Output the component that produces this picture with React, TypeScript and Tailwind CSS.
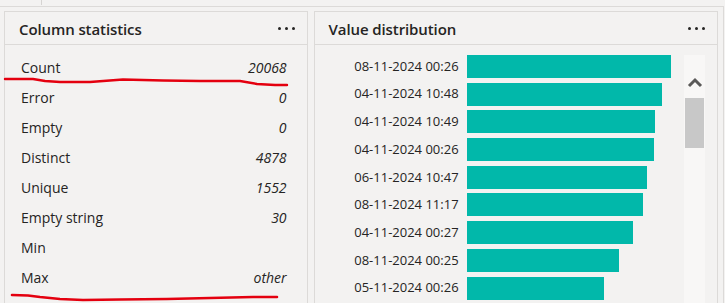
import React from "react";

const stats: { label: string; value: string }[] = [
  { label: "Count", value: "20068" },
  { label: "Error", value: "0" },
  { label: "Empty", value: "0" },
  { label: "Distinct", value: "4878" },
  { label: "Unique", value: "1552" },
  { label: "Empty string", value: "30" },
  { label: "Min", value: "" },
  { label: "Max", value: "other" },
];

const bars: { label: string; width: number }[] = [
  { label: "08-11-2024 00:26", width: 204 },
  { label: "04-11-2024 10:48", width: 195 },
  { label: "04-11-2024 10:49", width: 188 },
  { label: "04-11-2024 00:26", width: 187 },
  { label: "06-11-2024 10:47", width: 180 },
  { label: "08-11-2024 11:17", width: 176 },
  { label: "04-11-2024 00:27", width: 166 },
  { label: "08-11-2024 00:25", width: 152 },
  { label: "05-11-2024 00:26", width: 137 },
];

const Dots = () => (
  <div className="flex items-center gap-[4px] pt-[1px]">
    <span className="w-[3px] h-[3px] rounded-full bg-[#252423]" />
    <span className="w-[3px] h-[3px] rounded-full bg-[#252423]" />
    <span className="w-[3px] h-[3px] rounded-full bg-[#252423]" />
  </div>
);

const PanelHeader = ({ title }: { title: string }) => (
  <div className="h-[33px] flex items-center justify-between border-b border-[#dcdad8] pl-[14px] pr-[12px]">
    <span className="pt-[3px] text-[15px] font-semibold text-[#252423] tracking-[-0.1px]">
      {title}
    </span>
    <Dots />
  </div>
);

export default function App() {
  return (
    <div
      className="h-[303px] w-[725px] overflow-hidden bg-[#f3f2f1] relative"
      style={{ fontFamily: "'Open Sans', 'Noto Sans', sans-serif" }}
    >
      <div className="absolute left-[41px] top-0 h-[5px] w-px bg-[#d6d4d2]" />
      <div className="mt-[6px] mr-[1px] border-t border-r border-[#dcdad8] h-[320px] pt-[4px] pl-[4px] pr-[5px] flex gap-[6px]">
        {/* Column statistics */}
        <div className="relative w-[304px] h-[320px] border border-[#dcdad8]">
          <PanelHeader title="Column statistics" />
          <div className="pt-[7px] pl-[16px] pr-[20px]">
            {stats.map((s) => (
              <div
                key={s.label}
                className="h-[30px] flex items-center justify-between text-[14px] text-[#252423]"
              >
                <span>{s.label}</span>
                <span className="italic">{s.value}</span>
              </div>
            ))}
          </div>
          <svg
            className="absolute left-[-5px] top-[-11px] pointer-events-none"
            width="300"
            height="310"
            viewBox="0 0 300 310"
          >
            <path
              d="M5 78 L33 78 L45 80 L60 81 L90 81 L123 78.5 L163 79.5 L200 80 L240 80 L257 83 L275 84 L287 84"
              fill="none"
              stroke="#e4000f"
              strokeWidth="2.4"
              strokeLinecap="round"
              strokeLinejoin="round"
            />
            <path
              d="M12 294 L28 294.5 L40 296 L60 298 L83 299 L120 298.5 L167 298 L210 297 L253 296 L277 296"
              fill="none"
              stroke="#e4000f"
              strokeWidth="2.6"
              strokeLinecap="round"
              strokeLinejoin="round"
            />
          </svg>
        </div>

        {/* Value distribution */}
        <div className="w-[405px] h-[320px] border border-[#dcdad8]">
          <PanelHeader title="Value distribution" />
          <div className="flex pt-[10px]">
            <div className="flex flex-col gap-[4.7px]">
              {bars.map((b) => (
                <div key={b.label} className="h-[23px] flex items-center">
                  <span className="w-[152px] text-right text-[13px] text-[#252423] pr-[8px]">
                    {b.label}
                  </span>
                  <div
                    className="h-[23px] bg-[#01b8aa]"
                    style={{ width: b.width }}
                  />
                </div>
              ))}
            </div>
            <div className="ml-auto mr-[12px] w-[21px] h-[260px] bg-[#f8f7f6] flex flex-col items-center">
              <svg width="16" height="12" viewBox="0 0 16 12" className="mt-[21px]">
                <path
                  d="M2 10 L8 4 L14 10"
                  fill="none"
                  stroke="#5a5958"
                  strokeWidth="3"
                />
              </svg>
              <div className="mt-[10px] w-[19px] h-[50px] bg-[#c8c8c8]" />
            </div>
          </div>
        </div>
      </div>
    </div>
  );
}
